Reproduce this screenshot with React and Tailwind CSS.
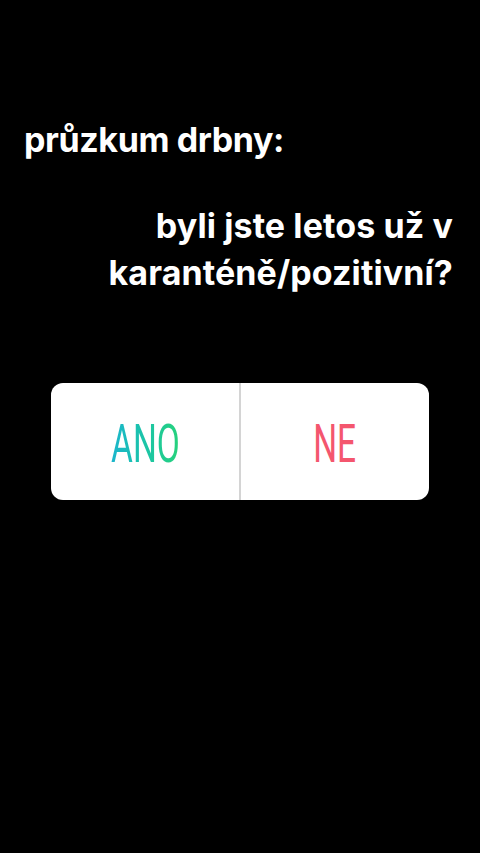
import React from 'react';

const App = () => {
    return (
        <div className="w-[480px] h-[853px] bg-black overflow-hidden" style={{ fontFamily: 'Inter, "Noto Sans", sans-serif' }}>
            <div className="pt-[119px] pl-[24px] text-white text-[34px] font-bold leading-[42px] tracking-[-0.4px]">
                průzkum drbny:
            </div>

            <div className="mt-[41px] pr-[27px] text-right text-white text-[34px] font-bold leading-[47px] tracking-[0.1px]">
                <div>byli jste letos už v</div>
                <div>karanténě/pozitivní?</div>
            </div>

            <div className="mt-[87px] mx-[51px] h-[117px] bg-white rounded-[12px] flex">
                <div className="flex-1 flex items-center justify-center border-r-2 border-[#d4d4d4]">
                    <span
                        className="text-[54px] leading-none font-normal inline-block scale-x-[0.62] translate-y-[2px] bg-gradient-to-r from-[#1cb5cc] to-[#27d27a] bg-clip-text text-transparent"
                        style={{ fontFamily: 'Roboto, sans-serif' }}
                    >
                        ANO
                    </span>
                </div>
                <div className="flex-1 flex items-center justify-center">
                    <span
                        className="text-[54px] leading-none font-normal inline-block scale-x-[0.62] translate-y-[2px] text-[#f4566e]"
                        style={{ fontFamily: 'Roboto, sans-serif' }}
                    >
                        NE
                    </span>
                </div>
            </div>
        </div>
    );
};

export default App;
